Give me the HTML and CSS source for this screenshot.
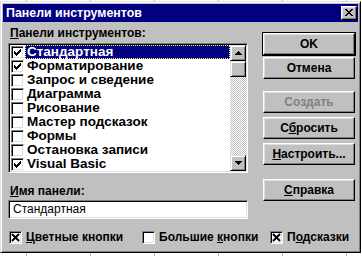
FILE: index.html
```html
<!DOCTYPE html>
<html lang="ru">
<head>
  <meta charset="UTF-8" />
  <title>Панели инструментов</title>
  <link rel="stylesheet" href="styles.css">
</head>
<body>
  <div class="window">
    <div class="title-bar">
      <span class="title">Панели инструментов</span>
      <button class="close">
        <svg width="8" height="7" viewBox="0 0 8 7"><path d="M0 0h2v1H0zM6 0h2v1H6zM1 1h2v1H1zM5 1h2v1H5zM2 2h4v1H2zM3 3h2v1H3zM2 4h4v1H2zM1 5h2v1H1zM5 5h2v1H5zM0 6h2v1H0zM6 6h2v1H6z" fill="#000"/></svg>
      </button>
    </div>

    <div class="dialog">
      <div class="left">
        <div class="caption"><u>П</u>анели инструментов:</div>
        <div class="list">
          <ul class="items">
            <li><span class="box checked"></span><span class="name selected">Стандартная</span></li>
            <li><span class="box checked"></span><span class="name">Форматирование</span></li>
            <li><span class="box"></span><span class="name">Запрос и сведение</span></li>
            <li><span class="box"></span><span class="name">Диаграмма</span></li>
            <li><span class="box"></span><span class="name">Рисование</span></li>
            <li><span class="box"></span><span class="name">Мастер подсказок</span></li>
            <li><span class="box"></span><span class="name">Формы</span></li>
            <li><span class="box"></span><span class="name">Остановка записи</span></li>
            <li><span class="box checked"></span><span class="name">Visual Basic</span></li>
          </ul>
          <div class="scrollbar">
            <div class="arrow">
              <svg width="7" height="4" viewBox="0 0 7 4"><path d="M3 0h1v1H3zM2 1h3v1H2zM1 2h5v1H1zM0 3h7v1H0z" fill="#000"/></svg>
            </div>
            <div class="thumb"></div>
            <div class="track"></div>
            <div class="arrow">
              <svg width="7" height="4" viewBox="0 0 7 4"><path d="M0 0h7v1H0zM1 1h5v1H1zM2 2h3v1H2zM3 3h1v1H3z" fill="#000"/></svg>
            </div>
          </div>
        </div>

        <div class="caption second"><u>И</u>мя панели:</div>
        <div class="field">Стандартная</div>
      </div>

      <div class="buttons">
        <div class="default-frame"><button class="btn">OK</button></div>
        <button class="btn cancel">Отмена</button>
        <button class="btn create" disabled>Создать</button>
        <button class="btn reset">С<u>б</u>росить</button>
        <button class="btn setup"><u>Н</u>астроить...</button>
        <button class="btn help"><u>С</u>правка</button>
      </div>

      <div class="options">
        <div class="option"><span class="box crossed"></span><span><u>Ц</u>ветные кнопки</span></div>
        <div class="option"><span class="box"></span><span>Большие <u>к</u>нопки</span></div>
        <div class="option"><span class="box crossed"></span><span>П<u>о</u>дсказки</span></div>
      </div>
    </div>
  </div>

  <script>
    // marcas dentro das caixas
    const check = '<svg width="11" height="11" viewBox="0 0 11 11"><path d="M2 4h1v3H2zM3 5h1v3H3zM4 6h1v3H4zM5 5h1v3H5zM6 4h1v3H6zM7 3h1v3H7zM8 2h1v3H8z" fill="#000"/></svg>';
    const cross = '<svg width="11" height="11" viewBox="0 0 11 11"><path d="M2 2L9 9M9 2L2 9" stroke="#000" stroke-width="2"/></svg>';

    document.querySelectorAll('.box.checked').forEach(el => { el.innerHTML = check; });
    document.querySelectorAll('.box.crossed').forEach(el => { el.innerHTML = cross; });
  </script>
</body>
</html>
```

FILE: styles.css
```css
body {
  margin: 0;
  background-color: #fff;
  background-image: linear-gradient(to right, #c0c0c0 1px, transparent 1px);
  background-size: 64px 100%;
  background-position: 26px 0;
  font-family: "Liberation Sans", Arial, sans-serif;
  font-size: 12px;
  font-weight: bold;
  color: #000;
}

.window {
  box-sizing: border-box;
  width: 361px;
  height: 252px;
  margin-top: 1px;
  padding: 2px;
  background: #c0c0c0;
  border: 1px solid;
  border-color: #dfdfdf #000 #000 #dfdfdf;
  box-shadow: inset 1px 1px #fff, inset -1px -1px #808080;
}

.title-bar {
  height: 18px;
  display: flex;
  align-items: center;
  justify-content: space-between;
  padding: 0 1px 0 3px;
  background: #000080;
  color: #fff;
}

.title {
  font-size: 12.4px;
}

.close {
  box-sizing: border-box;
  width: 16px;
  height: 14px;
  padding: 2px 0 0 3px;
  display: flex;
  align-items: flex-start;
  background: #c0c0c0;
  border: 1px solid;
  border-color: #fff #000 #000 #fff;
  box-shadow: inset -1px -1px #808080, inset 1px 1px #dfdfdf;
}

.dialog {
  display: grid;
  grid-template-columns: 240px 94px;
  column-gap: 14px;
  padding: 0 2px 0 5px;
}

.caption {
  height: 13px;
  line-height: 13px;
  margin-top: 5px;
  padding-left: 2px;
}

.list {
  box-sizing: border-box;
  height: 130px;
  margin-top: 3px;
  padding: 1px;
  display: flex;
  background: #fff;
  border: 1px solid;
  border-color: #808080 #fff #fff #808080;
  box-shadow: inset 1px 1px #000, inset -1px -1px #dfdfdf;
}

.items {
  flex: 1;
  list-style: none;
  margin: 0;
  padding: 0 0 0 1px;
  font-size: 13.5px;
}

.items li {
  height: 14px;
  display: flex;
  align-items: center;
}

.name {
  flex: 1;
  height: 14px;
  line-height: 14px;
  margin-left: 1px;
  padding-left: 2px;
  white-space: nowrap;
}

.name.selected {
  background: #000080;
  color: #fff;
  outline: 1px dotted #ffff80;
  outline-offset: -1px;
}

.box {
  box-sizing: border-box;
  width: 13px;
  height: 13px;
  flex-shrink: 0;
  display: flex;
  background: #fff;
  border: 1px solid;
  border-color: #808080 #fff #fff #808080;
  box-shadow: inset 1px 1px #000, inset -1px -1px #dfdfdf;
}

.scrollbar {
  width: 16px;
  display: flex;
  flex-direction: column;
}

.arrow,
.thumb {
  box-sizing: border-box;
  height: 16px;
  display: flex;
  align-items: center;
  justify-content: center;
  background: #c0c0c0;
  border: 1px solid;
  border-color: #dfdfdf #000 #000 #dfdfdf;
  box-shadow: inset 1px 1px #fff, inset -1px -1px #808080;
}

.track {
  flex: 1;
  background: repeating-conic-gradient(#c0c0c0 0 25%, #fff 0 50%) 0 0 / 2px 2px;
}

.second {
  margin-top: 12px;
}

.field {
  box-sizing: border-box;
  height: 19px;
  margin-top: 2px;
  padding-left: 4px;
  line-height: 17px;
  font-weight: normal;
  background: #fff;
  border: 1px solid;
  border-color: #808080 #fff #fff #808080;
  box-shadow: inset 1px 1px #000, inset -1px -1px #dfdfdf;
}

.buttons {
  display: flex;
  flex-direction: column;
  padding-top: 10px;
}

.default-frame {
  border: 1px solid #000;
  width: 92px;
  height: 22px;
}

.btn {
  box-sizing: border-box;
  display: block;
  width: 92px;
  height: 22px;
  padding: 0;
  font: inherit;
  color: #000;
  background: #c0c0c0;
  border: 1px solid;
  border-color: #fff #000 #000 #fff;
  box-shadow: inset -1px -1px #808080, inset 1px 1px #dfdfdf;
}

.cancel,
.create,
.reset,
.setup,
.help {
  margin-left: 1px;
}

.cancel {
  margin-top: 1px;
}

.create {
  margin-top: 12px;
  color: #808080;
}

.reset,
.setup {
  margin-top: 4px;
}

.help {
  margin-top: 14px;
}

.options {
  grid-column: 1 / -1;
  display: grid;
  grid-template-columns: 133px 128px auto;
  margin-top: 11px;
  padding-left: 1px;
}

.option {
  display: flex;
  align-items: center;
  gap: 4px;
  height: 14px;
}
```
